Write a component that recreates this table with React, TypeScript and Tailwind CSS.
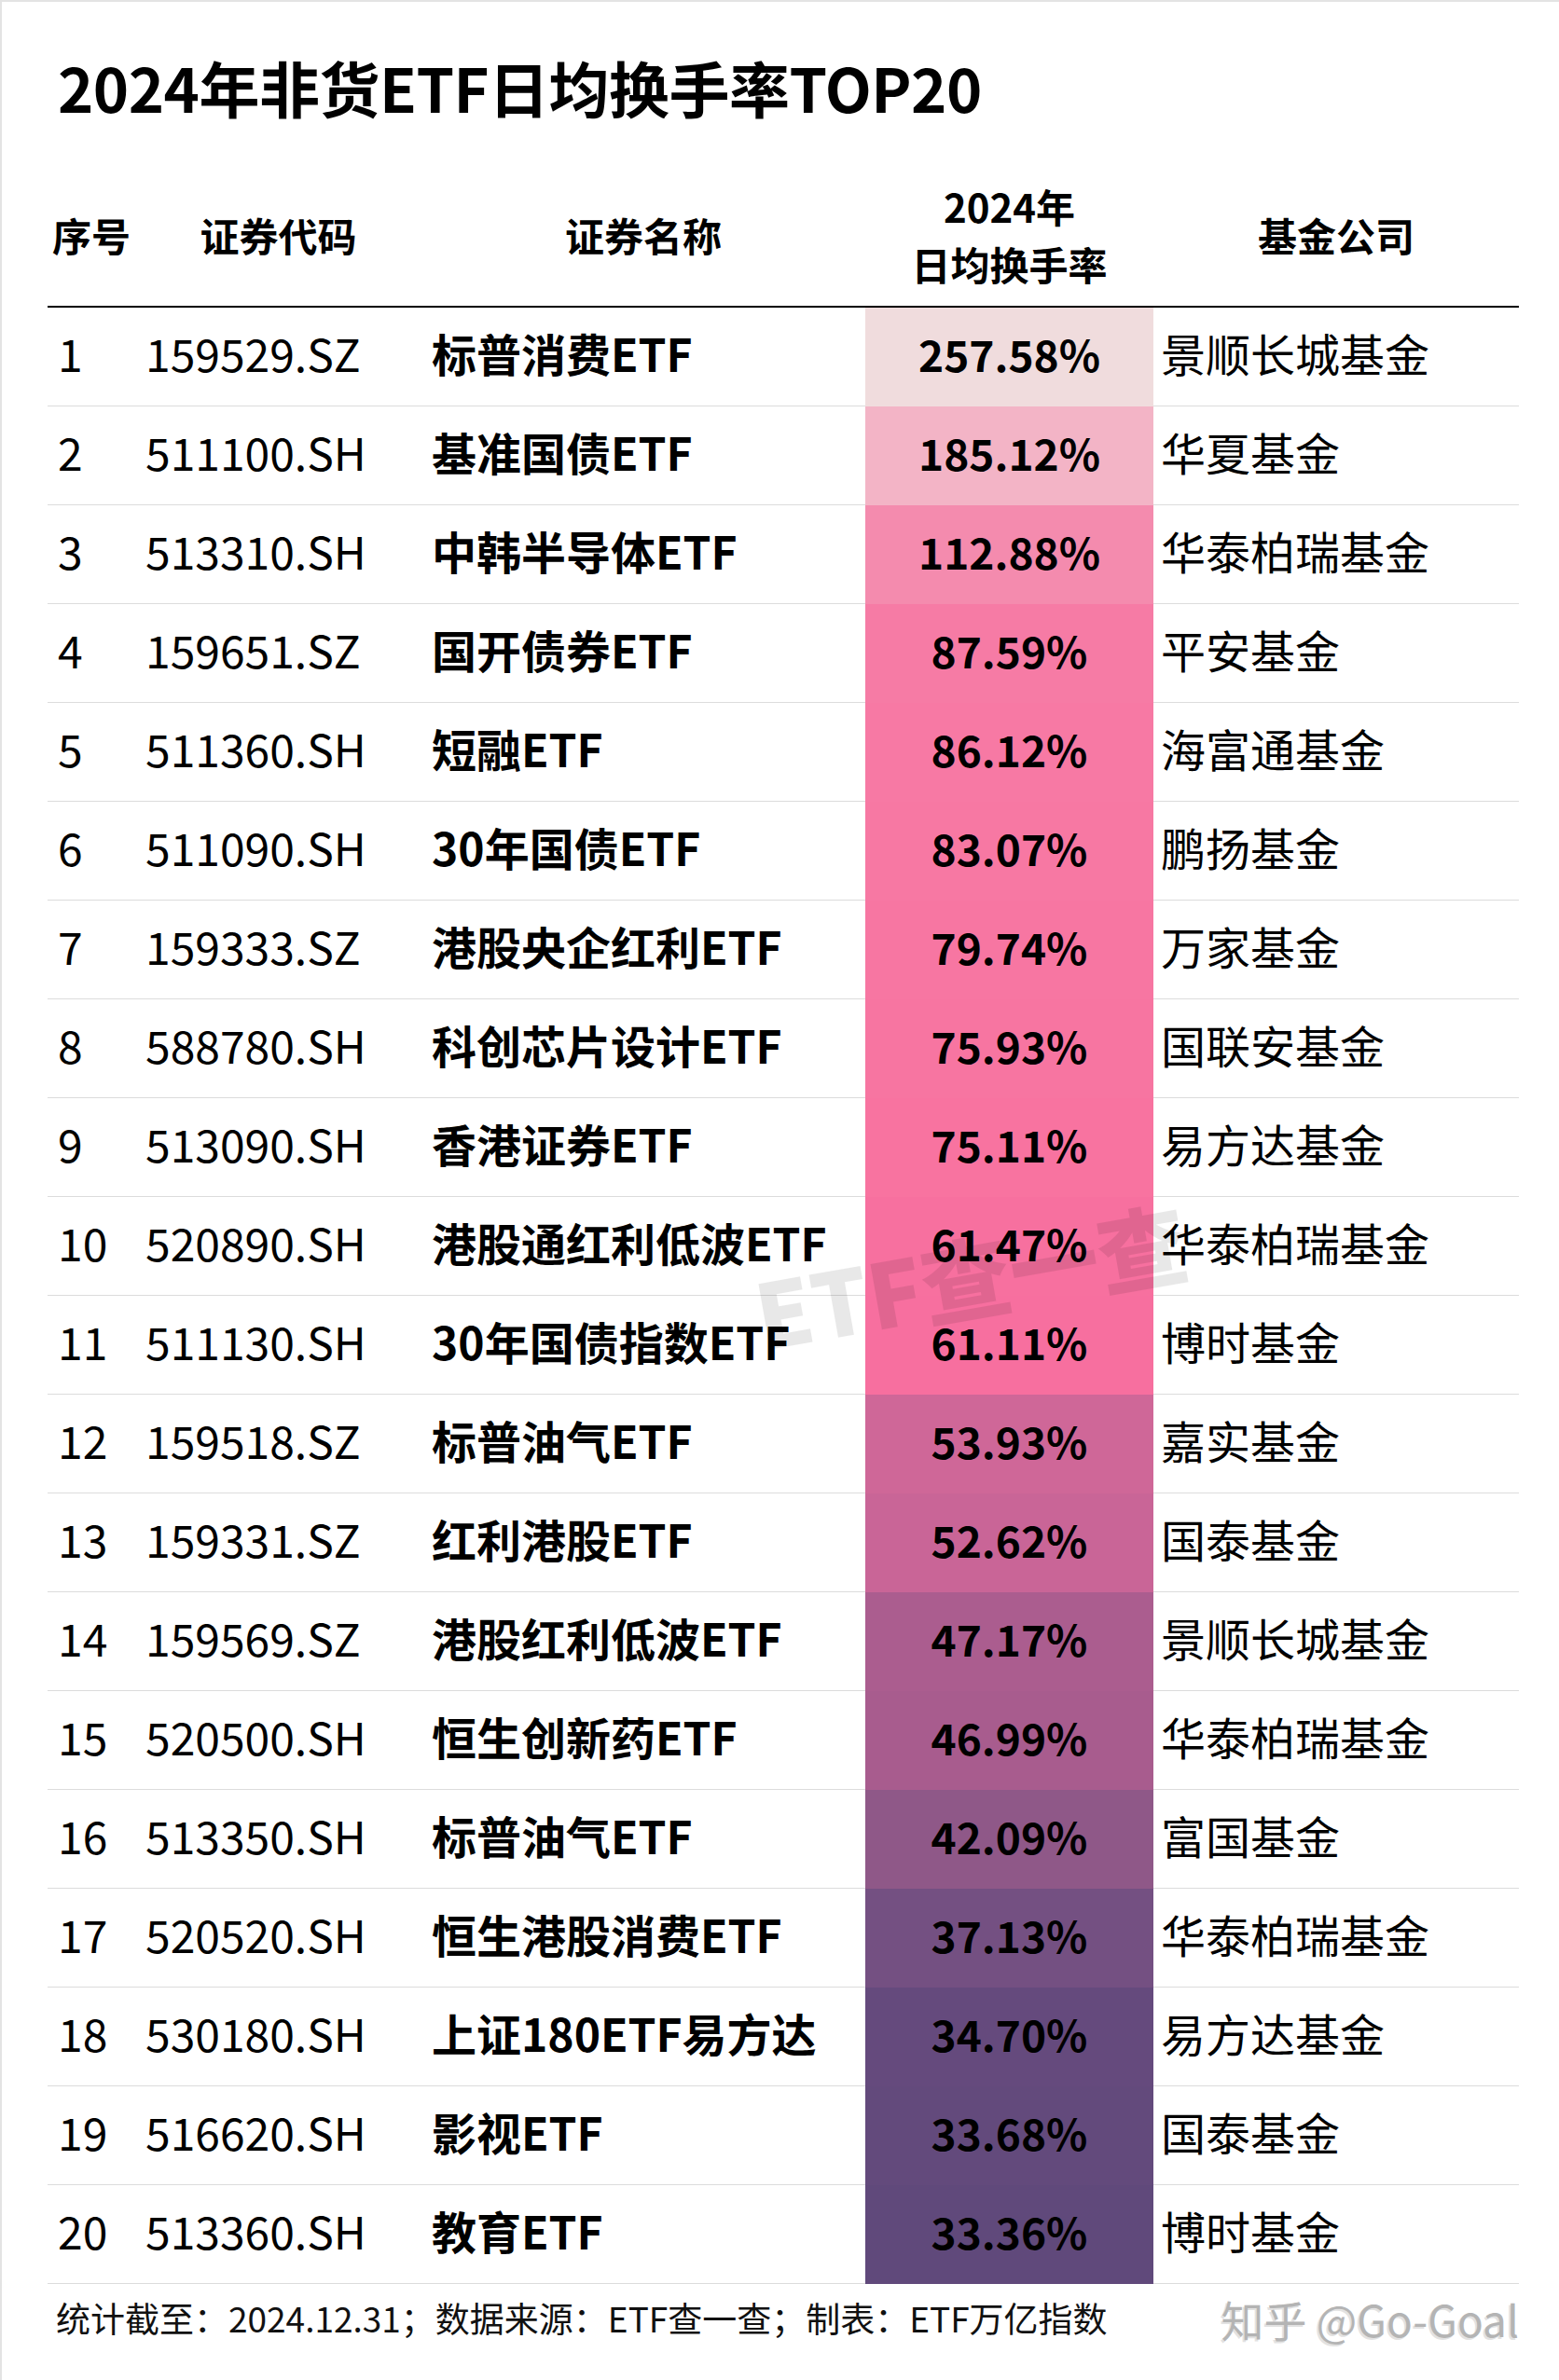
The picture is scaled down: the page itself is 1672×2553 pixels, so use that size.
type Row = {
  no: number
  code: string
  name: string
  rate: string
  company: string
  color: string
}

const rows: Row[] = [
  { no: 1, code: '159529.SZ', name: '标普消费ETF', rate: '257.58%', company: '景顺长城基金', color: 'bg-[#f0dcdd]' },
  { no: 2, code: '511100.SH', name: '基准国债ETF', rate: '185.12%', company: '华夏基金', color: 'bg-[#f3b4c6]' },
  { no: 3, code: '513310.SH', name: '中韩半导体ETF', rate: '112.88%', company: '华泰柏瑞基金', color: 'bg-[#f48bae]' },
  { no: 4, code: '159651.SZ', name: '国开债券ETF', rate: '87.59%', company: '平安基金', color: 'bg-[#f67ba5]' },
  { no: 5, code: '511360.SH', name: '短融ETF', rate: '86.12%', company: '海富通基金', color: 'bg-[#f779a4]' },
  { no: 6, code: '511090.SH', name: '30年国债ETF', rate: '83.07%', company: '鹏扬基金', color: 'bg-[#f778a3]' },
  { no: 7, code: '159333.SZ', name: '港股央企红利ETF', rate: '79.74%', company: '万家基金', color: 'bg-[#f776a2]' },
  { no: 8, code: '588780.SH', name: '科创芯片设计ETF', rate: '75.93%', company: '国联安基金', color: 'bg-[#f775a1]' },
  { no: 9, code: '513090.SH', name: '香港证券ETF', rate: '75.11%', company: '易方达基金', color: 'bg-[#f873a0]' },
  { no: 10, code: '520890.SH', name: '港股通红利低波ETF', rate: '61.47%', company: '华泰柏瑞基金', color: 'bg-[#f7709f]' },
  { no: 11, code: '511130.SH', name: '30年国债指数ETF', rate: '61.11%', company: '博时基金', color: 'bg-[#f76f9f]' },
  { no: 12, code: '159518.SZ', name: '标普油气ETF', rate: '53.93%', company: '嘉实基金', color: 'bg-[#cf6798]' },
  { no: 13, code: '159331.SZ', name: '红利港股ETF', rate: '52.62%', company: '国泰基金', color: 'bg-[#c96597]' },
  { no: 14, code: '159569.SZ', name: '港股红利低波ETF', rate: '47.17%', company: '景顺长城基金', color: 'bg-[#ab5d8f]' },
  { no: 15, code: '520500.SH', name: '恒生创新药ETF', rate: '46.99%', company: '华泰柏瑞基金', color: 'bg-[#a85c8e]' },
  { no: 16, code: '513350.SH', name: '标普油气ETF', rate: '42.09%', company: '富国基金', color: 'bg-[#8f5888]' },
  { no: 17, code: '520520.SH', name: '恒生港股消费ETF', rate: '37.13%', company: '华泰柏瑞基金', color: 'bg-[#745082]' },
  { no: 18, code: '530180.SH', name: '上证180ETF易方达', rate: '34.70%', company: '易方达基金', color: 'bg-[#654a7d]' },
  { no: 19, code: '516620.SH', name: '影视ETF', rate: '33.68%', company: '国泰基金', color: 'bg-[#634a7c]' },
  { no: 20, code: '513360.SH', name: '教育ETF', rate: '33.36%', company: '博时基金', color: 'bg-[#60497b]' },
]

const cols = 'grid grid-cols-[94px_307px_476px_309px_392px]'
const cell = 'flex items-center pb-[9px] border-b border-[#dcdcdc]'

export default function App() {
  return (
    <div className="relative w-[1672px] h-[2553px] overflow-hidden bg-white border-l-2 border-t-2 border-[#e3e3e3] font-['Noto_Sans_CJK_SC',sans-serif] text-black">
      <div className="pl-[49px] pr-[43px]">
        <h1 className="h-[188px] flex items-center pb-[5px] pl-[11px] text-[65px] font-bold leading-none tracking-[-0.5px]">
          2024年非货ETF日均换手率TOP20
        </h1>

        <div className={`${cols} h-[140px] items-center pb-[16px] border-b-2 border-black text-[42px] font-bold leading-[62px]`}>
          <div className="text-center">序号</div>
          <div className="text-center">证券代码</div>
          <div className="text-center">证券名称</div>
          <div className="text-center">
            <div>2024年</div>
            <div>日均换手率</div>
          </div>
          <div className="text-center">基金公司</div>
        </div>

        {rows.map((r) => (
          <div key={r.no} className={`${cols} h-[106px] text-[48px] leading-none`}>
            <div className={`${cell} pl-[11px]`}>{r.no}</div>
            <div className={`${cell} pl-[11px]`}>{r.code}</div>
            <div className={`${cell} pl-[11px] font-bold`}>{r.name}</div>
            <div className={`flex items-center justify-center pb-[8px] text-[46px] font-bold ${r.color}`}>{r.rate}</div>
            <div className={`${cell} pl-[8px]`}>{r.company}</div>
          </div>
        ))}

        <div className="h-[78px] flex items-center justify-between pb-[4px]">
          <span className="pl-[9px] text-[37px] text-[#111]">
            统计截至：2024.12.31；数据来源：ETF查一查；制表：ETF万亿指数
          </span>
          <span className="text-[46px] text-[#b4b4b4] [text-shadow:-2px_2px_0_#e2e2e2]">
            知乎 @Go-Goal
          </span>
        </div>
      </div>

      <div className="pointer-events-none absolute left-[1039px] top-[1366px] -translate-x-1/2 -translate-y-1/2 -rotate-10 whitespace-nowrap text-[96px] font-black leading-none text-black/[0.09]">
        ETF查一查
      </div>
    </div>
  )
}
